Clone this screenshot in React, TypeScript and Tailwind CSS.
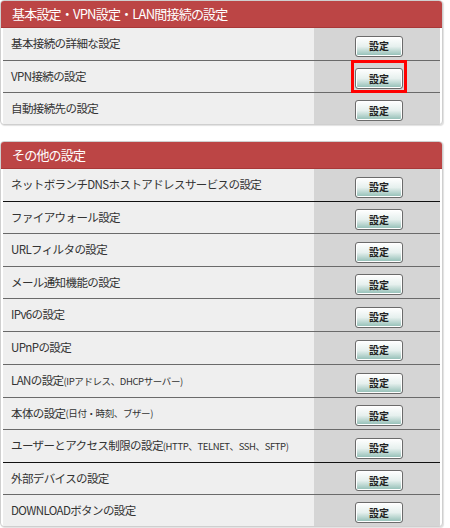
import React from "react";

type Row = { label: React.ReactNode; h: number; active?: boolean; dark?: boolean };

const font = { fontFamily: '"Noto Sans CJK JP", "Noto Sans", sans-serif' };

const SetButton: React.FC<{ active?: boolean }> = ({ active }) => (
  <div className={active ? "border-[3px] border-[#ff0000] p-[1px] -m-[4px]" : ""}>
    <button
      type="button"
      className="w-[48px] h-[21px] rounded-[3px] border border-[#6b6b6b] bg-gradient-to-b from-[#ffffff] via-[#e6f0ee] to-[#8fbdb4] text-[10px] font-bold text-[#222] leading-none shadow-[inset_0_0_0_1px_#ffffff]"
    >
      設定
    </button>
  </div>
);

const Panel: React.FC<{ title: string; rows: Row[] }> = ({ title, rows }) => (
  <div className="w-[443px] rounded-[4px] border border-[#cfcfcf] bg-white overflow-hidden shadow-[1px_1px_1px_rgba(0,0,0,0.12)]">
    <div className="h-[27px] bg-[#bc4545] border-b border-[#a83838] flex items-center pl-[11px] text-[13px] tracking-[-0.8px] text-white">
      {title}
    </div>
    <div className="px-[2px]">
      {rows.map((r, i) => (
        <div
          key={i}
          style={{ height: r.h }}
          className={
            "grid grid-cols-[311px_1fr] " +
            (i > 0 ? (r.dark ? "border-t border-[#111]" : "border-t border-[#6a6a6a]") : "")
          }
        >
          <div className="bg-[#efefef] flex items-center pl-[8px] text-[11.5px] tracking-[-0.6px] text-[#333] whitespace-nowrap">
            {r.label}
          </div>
          <div className="bg-[#d5d5d5] flex items-center pl-[41px]">
            <SetButton active={r.active} />
          </div>
        </div>
      ))}
    </div>
  </div>
);

const small = "text-[9.5px] tracking-[-0.4px]";

export default function App() {
  const rows1: Row[] = [
    { label: "基本接続の詳細な設定", h: 32 },
    { label: "VPN接続の設定", h: 32, active: true },
    { label: "自動接続先の設定", h: 32 },
  ];
  const rows2: Row[] = [
    { label: "ネットボランチDNSホストアドレスサービスの設定", h: 32 },
    { label: "ファイアウォール設定", h: 32, dark: true },
    { label: "URLフィルタの設定", h: 33 },
    { label: "メール通知機能の設定", h: 32 },
    { label: "IPv6の設定", h: 33 },
    { label: "UPnPの設定", h: 33 },
    {
      label: (
        <>
          LANの設定<span className={small}>(IPアドレス、DHCPサーバー)</span>
        </>
      ),
      h: 33,
    },
    {
      label: (
        <>
          本体の設定<span className={small}>(日付・時刻、ブザー)</span>
        </>
      ),
      h: 32,
    },
    {
      label: (
        <>
          ユーザーとアクセス制限の設定<span className={small}>(HTTP、TELNET、SSH、SFTP)</span>
        </>
      ),
      h: 33,
    },
    { label: "外部デバイスの設定", h: 32, dark: true },
    { label: "DOWNLOADボタンの設定", h: 32 },
  ];
  return (
    <div className="w-[450px] h-[528px] bg-white flex flex-col gap-[16px] overflow-hidden" style={font}>
      <Panel title="基本設定・VPN設定・LAN間接続の設定" rows={rows1} />
      <Panel title="その他の設定" rows={rows2} />
    </div>
  );
}
